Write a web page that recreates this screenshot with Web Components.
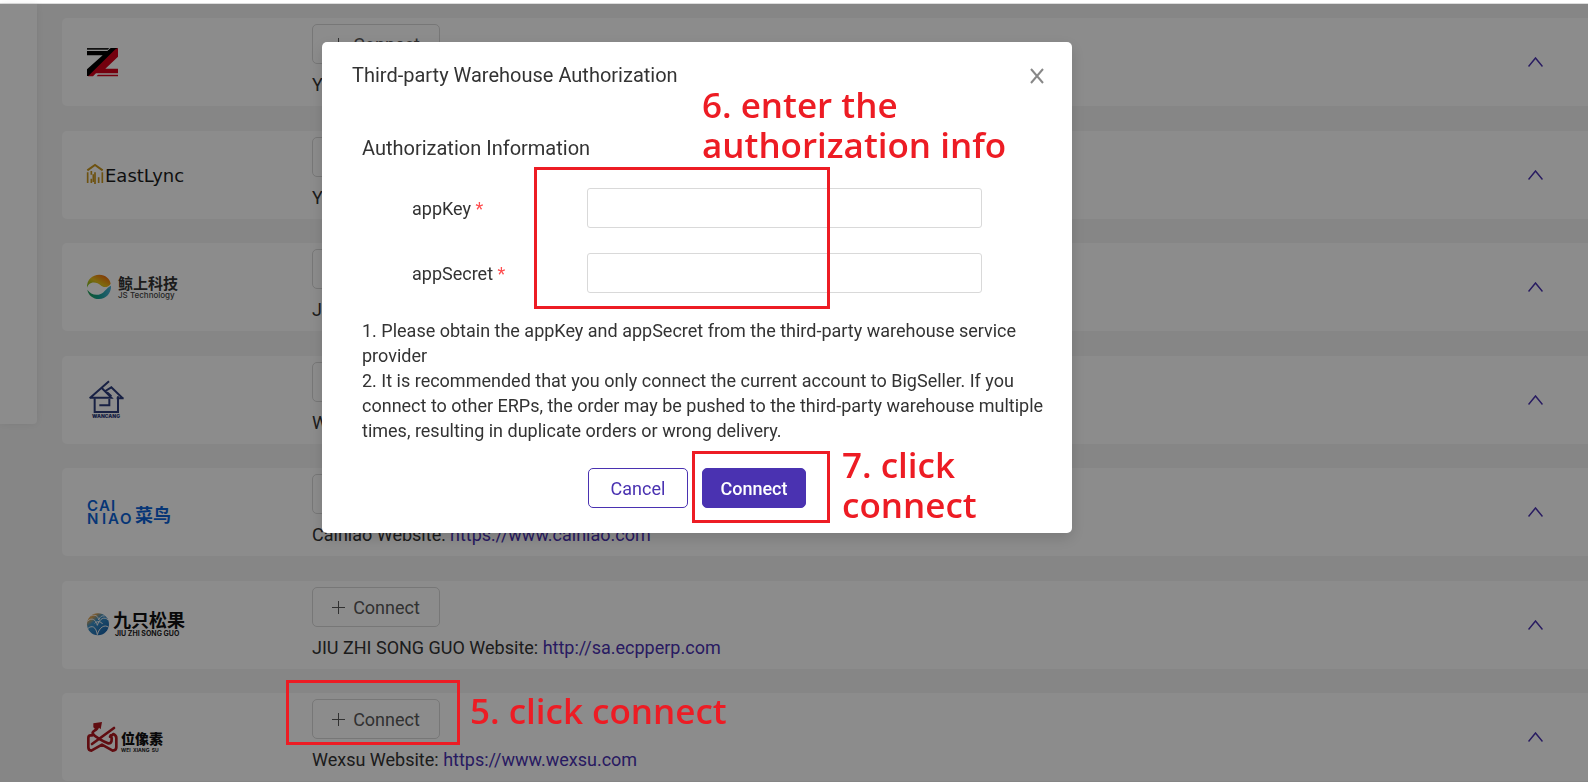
<!DOCTYPE html>
<html lang="en">
<head>
<meta charset="utf-8">
<title>Third-party Warehouse Authorization</title>
<style>
  html, body { margin: 0; }
  body {
    font: 18px/25px Roboto, "Noto Sans CJK SC", sans-serif;
    color: #333;
    background: #f5f5f5;
    --brand: #4a32b1;
    --mark: #ed1c24;
    overflow: hidden;
  }
</style>
</head>
<body>

<warehouse-page>
  <warehouse-card>
    <svg slot="logo" width="120" height="48" role="img" aria-label="Z logo">
      <g transform="translate(-17 -8) scale(.33333)">
        <path fill="#222" d="M51 54H118L113 59H51z"/>
        <path fill="#000" d="M51 63H112L122 54H144L60 138H51V118L98 76H51z"/>
        <path fill="#d4001a" d="M144 54V80L106 116H144V130H78L69 139H54L136 58zM84 134H144V139H80z"/>
      </g>
    </svg>
    <span slot="site">Y</span>
  </warehouse-card>

  <warehouse-card>
    <svg slot="logo" width="120" height="48" role="img" aria-label="Eastlync">
      <g transform="translate(-17 -121) scale(.33333)" fill="none" stroke="#c8961e" stroke-width="5">
        <path d="M52 421L75 405L98 421" stroke-width="6"/>
        <path d="M53 427V459M64 446V459M75 427V462M86 442V459M97 427V459"/>
        <path d="M64 423V434M70 433V456"/>
      </g>
      <text x="18" y="31" font-family="DejaVu Sans, sans-serif" font-size="18" fill="#1c1c1c">EastLync</text>
    </svg>
    <span slot="site">Y</span>
  </warehouse-card>

  <warehouse-card>
    <svg slot="logo" width="120" height="48" role="img" aria-label="JS Technology">
      <defs>
        <linearGradient id="js-warm" x1="0" y1="1" x2="1" y2="0">
          <stop offset="0" stop-color="#5db51a"/><stop offset=".45" stop-color="#e8c01c"/>
          <stop offset=".75" stop-color="#ee8210"/><stop offset="1" stop-color="#d9400f"/>
        </linearGradient>
        <linearGradient id="js-cool" x1="0" y1="0" x2="1" y2="0">
          <stop offset="0" stop-color="#1f9e50"/><stop offset=".5" stop-color="#15a296"/>
          <stop offset="1" stop-color="#4bb0d8"/>
        </linearGradient>
      </defs>
      <g transform="translate(-17 -8) scale(.33333)">
        <path fill="url(#js-warm)" d="M51 98C50 74 67 59 88 59C106 59 120 72 122 86C116 97 101 100 92 91C84 82 66 79 57 88C53 92 52 96 51 98z"/>
        <path fill="url(#js-cool)" d="M52 104C60 116 76 124 92 117C106 110 108 100 123 92C124 114 108 132 87 132C69 132 55 121 52 104z"/>
      </g>
      <text x="31" y="26" font-family="Noto Sans CJK SC, sans-serif" font-size="15" font-weight="700" fill="#333">鲸上科技</text>
      <text x="31" y="35" font-family="Inter, sans-serif" font-size="8" font-weight="500" fill="#444">JS Technology</text>
    </svg>
    <span slot="site">J</span>
  </warehouse-card>

  <warehouse-card>
    <svg slot="logo" width="120" height="48" role="img" aria-label="Wancang">
      <g transform="translate(-17 -121) scale(.33333)" fill="none" stroke="#2c3c7c" stroke-width="6">
        <path d="M59 430L117 379M59 428H124L96 400M106 408L124 397L158 430M111 412L124 424M140 430H161"/>
        <path d="M74 430V471H144V424M88 451H118V432"/>
      </g>
      <text x="5" y="42" font-family="Inter, sans-serif" font-size="5" font-weight="900" fill="#2c3c7c">WANCANG</text>
    </svg>
    <span slot="site">W</span>
  </warehouse-card>

  <warehouse-card>
    <svg slot="logo" width="120" height="48" role="img" aria-label="Cainiao" fill="#0b63d8">
      <text font-family="Inter, sans-serif" font-size="15" font-weight="600"><tspan x="0 12 24" y="23">CAI</tspan><tspan x="0 15 21 33" y="36">NIAO</tspan></text>
      <text x="48" y="34" font-family="Noto Sans CJK SC, sans-serif" font-size="18" font-weight="700">菜鸟</text>
    </svg>
    <span slot="site">Cainiao Website: <site-link href="https://www.cainiao.com"></site-link></span>
  </warehouse-card>

  <warehouse-card>
    <svg slot="logo" width="120" height="48" role="img" aria-label="Jiu Zhi Song Guo">
      <defs>
        <linearGradient id="cone" x1="0" y1="0" x2=".8" y2="1">
          <stop offset="0" stop-color="#e88a1c"/><stop offset=".22" stop-color="#d8a050"/>
          <stop offset=".4" stop-color="#3a90c8"/><stop offset="1" stop-color="#1560a8"/>
        </linearGradient>
      </defs>
      <g transform="translate(-17 -121) scale(.33333)">
        <circle cx="84" cy="433" r="33" fill="url(#cone)"/>
        <g fill="none" stroke="#f2f2f2" stroke-width="3">
          <path d="M52 424C66 410 78 420 82 436C88 416 104 408 114 420M62 408C76 402 84 408 86 420C90 410 96 406 104 408M53 446C66 434 78 440 82 464C88 442 104 432 116 442M74 430C82 422 92 424 98 432"/>
        </g>
      </g>
      <text x="26" y="26" font-family="Noto Sans CJK SC, sans-serif" font-size="18" font-weight="700" fill="#111">九只松果</text>
      <text x="28" y="35" font-family="Inter, sans-serif" font-size="7" font-weight="700" fill="#222">JIU ZHI SONG GUO</text>
    </svg>
    <span slot="site">JIU ZHI SONG GUO Website: <site-link href="http://sa.ecpperp.com"></site-link></span>
  </warehouse-card>

  <warehouse-card>
    <svg slot="logo" width="120" height="48" role="img" aria-label="Wei Xiang Su">
      <g transform="translate(-17 -13) scale(.33333)">
        <g fill="none" stroke="#b01820" stroke-width="8" stroke-linejoin="round" stroke-linecap="round">
          <path d="M66 132L132 84M67 106H62Q55 106 55 114V142Q55 152 64 152L96 134L128 152Q139 152 139 142V114Q139 106 130 102L120 110"/>
          <path d="M84 78C82 94 66 90 68 100C72 110 104 126 114 130C126 132 128 116 122 106"/>
        </g>
        <path fill="#b01820" d="M70 70L96 66L92 88L84 80L76 88L70 82z"/>
      </g>
      <text x="34" y="31" font-family="Noto Sans CJK SC, sans-serif" font-size="14" font-weight="900" fill="#111">位像素</text>
      <text x="34" y="39" font-family="Inter, sans-serif" font-size="5" font-weight="700" fill="#222">WEI&#160; XIANG&#160; SU</text>
    </svg>
    <span slot="site">Wexsu Website: <site-link href="https://www.wexsu.com"></site-link></span>
  </warehouse-card>
</warehouse-page>

<auth-dialog heading="Third-party Warehouse Authorization">
  <auth-field label="appKey"></auth-field>
  <auth-field label="appSecret"></auth-field>
  <span slot="notes">1. Please obtain the appKey and appSecret from the third-party warehouse service provider<br>2. It is recommended that you only connect the current account to BigSeller. If you connect to other ERPs, the order may be pushed to the third-party warehouse multiple times, resulting in duplicate orders or wrong delivery.</span>
</auth-dialog>

<guide-marks></guide-marks>

<script>
const define = (name, html, setup) => {
  const template = document.createElement('template');
  template.innerHTML = html;
  customElements.define(name, class extends HTMLElement {
    constructor() {
      super();
      this.attachShadow({ mode: 'open' }).append(template.content.cloneNode(true));
    }
    connectedCallback() { if (setup) setup(this, this.shadowRoot); }
  });
};

define('warehouse-page', `
  <style>
    :host { display: block; }
    header { height: 3px; background: #fff; border-bottom: 1px solid #ddd; }
    .layout { display: flex; align-items: flex-start; gap: 25px; }
    aside { flex: none; width: 37px; height: 420px; background: #fff;
            border-radius: 0 0 4px 0; box-shadow: 0 0 8px rgba(0,0,0,.08); }
    main { flex: 1; padding-top: 14px; }
  </style>
  <header></header>
  <div class="layout"><aside></aside><main><slot></slot></main></div>`);

define('warehouse-card', `
  <style>
    :host { display: grid; grid-template-columns: 225px 1fr auto; align-items: center;
            box-sizing: border-box; height: 88px; margin-bottom: 25px; padding: 0 45px 0 25px;
            background: #fff; border-radius: 5px 0 0 5px; }
    :host(:nth-of-type(even)) { margin-bottom: 24px; }
    :host(:last-of-type) { margin-bottom: 0; }
    ::slotted(svg) { display: block; overflow: visible; }
    .body { display: flex; flex-direction: column; align-items: flex-start; gap: 8px; padding-bottom: 3px; }
    button { font: inherit; }
    .connect { display: flex; align-items: center; justify-content: center; gap: 8px;
               box-sizing: border-box; width: 128px; height: 40px; padding: 0;
               color: #595959; background: none; border: 1px solid #d9d9d9; border-radius: 5px; }
    .toggle { display: block; padding: 0; border: 0; background: none; color: var(--brand); }
    svg { display: block; fill: none; stroke: currentColor; }
  </style>
  <slot name="logo"></slot>
  <div class="body">
    <button class="connect" type="button">
      <svg width="13" height="14" stroke-width="1"><path d="M0 7.5H13M6.500 1V14"/></svg>Connect
    </button>
    <div><slot name="site"></slot></div>
  </div>
  <button class="toggle" type="button" aria-label="Collapse">
    <svg width="15" height="10" stroke-width="1.500"><path d="M.5 9.500L7.500 1L14.500 9.500"/></svg>
  </button>`);

define('site-link', `
  <style>:host { display: inline; } a { color: var(--brand); text-decoration: none; }</style><a></a>`,
  (host, root) => {
    const a = root.querySelector('a');
    a.href = host.getAttribute('href');
    a.textContent = host.getAttribute('href');
  });

define('auth-field', `
  <style>
    :host { display: grid; grid-template-columns: 175px 395px; align-items: center; }
    span { color: #ff4d4f; }
    input { box-sizing: border-box; width: 100%; height: 40px; padding: 0 12px; font: inherit;
            background: #fff; border: 1px solid #d9d9d9; border-radius: 3px; }
  </style>
  <label for="field"></label><input id="field" type="text" required>`,
  (host, root) => {
    root.querySelector('label').innerHTML = host.getAttribute('label') + ' <span>*</span>';
  });

define('auth-dialog', `
  <style>
    :host { position: fixed; inset: 4px 0 0; padding: 38px 0 0 322px; background: rgba(0,0,0,.45); }
    section { position: relative; box-sizing: border-box; width: 750px; padding: 21px 28px 25px 40px;
              background: #fff; border-radius: 5px; box-shadow: 0 5px 15px rgba(0,0,0,.15); }
    h2, h3, p { margin: 0; font-weight: 400; }
    h2, h3 { font-size: 20px; }
    header { display: flex; justify-content: space-between; align-items: center; margin-left: -10px; }
    h3 { margin-top: 48px; }
    .fields { display: grid; gap: 25px; padding: 27px 0 25px 50px; }
    footer { display: flex; justify-content: center; gap: 14px; padding: 25px 12px 0 0; }
    button { font: inherit; box-sizing: border-box; height: 40px; padding: 0; border-radius: 5px;
             border: 1px solid var(--brand); }
    .close { display: block; height: 16px; border: 0; background: none; color: #888; }
    .close svg { display: block; fill: none; stroke: currentColor; stroke-width: 2; }
    .cancel { width: 100px; background: #fff; color: var(--brand); }
    .ok { width: 104px; background: var(--brand); color: #fff; font-weight: 500; }
  </style>
  <section role="dialog" aria-labelledby="title">
    <header>
      <h2 id="title"></h2>
      <button class="close" type="button" aria-label="Close"><svg width="14" height="16"><path d="M1 1L13 15M13 1L1 15"/></svg></button>
    </header>
    <h3>Authorization Information</h3>
    <div class="fields"><slot></slot></div>
    <p><slot name="notes"></slot></p>
    <footer>
      <button class="cancel" type="button">Cancel</button>
      <button class="ok" type="button">Connect</button>
    </footer>
  </section>`,
  (host, root) => { root.querySelector('h2').textContent = host.getAttribute('heading'); });

define('guide-marks', `
  <style>
    :host { position: absolute; inset: 0; pointer-events: none; color: var(--mark);
            font: 600 35px/40px "Open Sans", sans-serif; }
    div { position: absolute; box-sizing: border-box; border: 3px solid var(--mark); }
    p { position: absolute; margin: 0; white-space: nowrap; }
    .fields { left: 534px; top: 167px; width: 296px; height: 142px; }
    .submit { left: 692px; top: 451px; width: 138px; height: 72px; }
    .row { left: 286px; top: 680px; width: 174px; height: 65px; }
    .six { left: 702px; top: 85px; }
    .seven { left: 842px; top: 445px; }
    .five { left: 470px; top: 691px; }
  </style>
  <div class="fields"></div><div class="submit"></div><div class="row"></div>
  <p class="six">6. enter the<br>authorization info</p>
  <p class="seven">7. click<br>connect</p>
  <p class="five">5. click connect</p>`);
</script>
</body>
</html>
